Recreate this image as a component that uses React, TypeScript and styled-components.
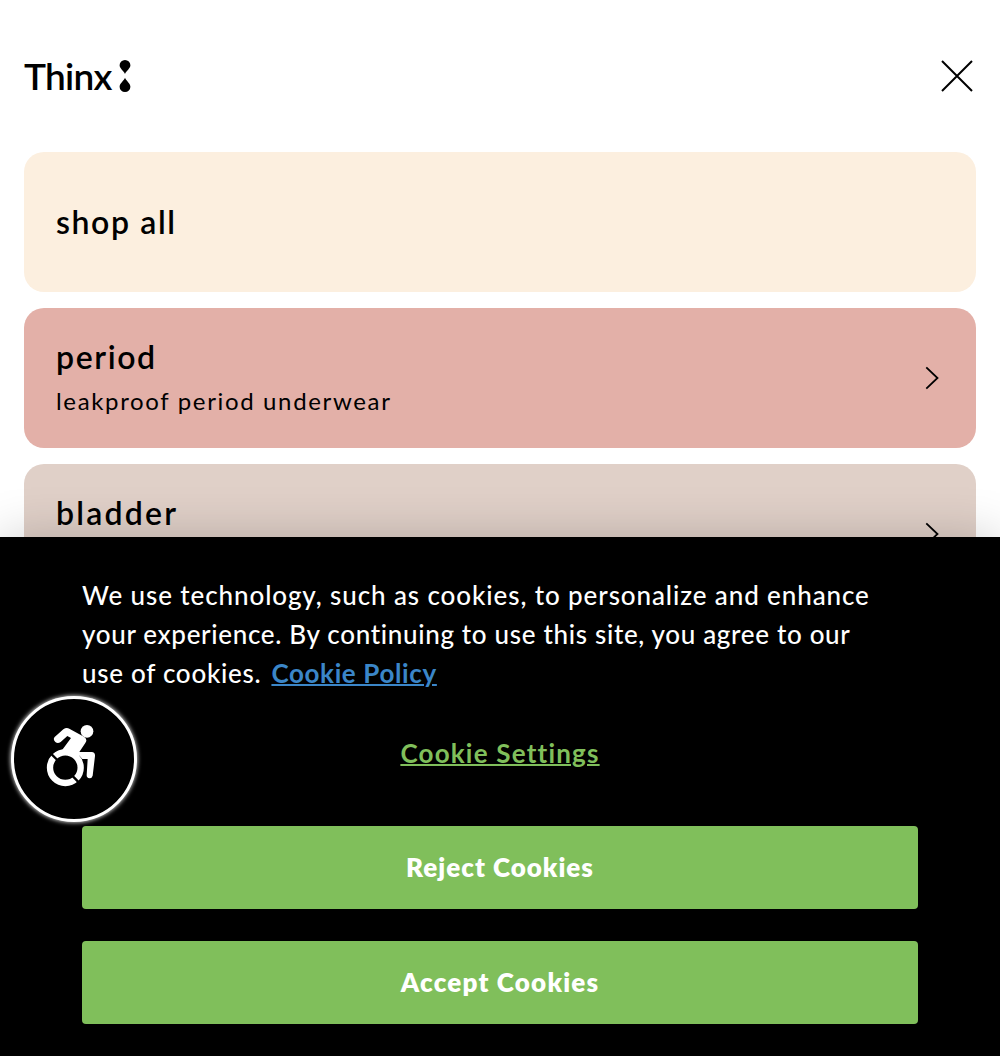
import React from "react";
import styled, { createGlobalStyle } from "styled-components";

const GlobalStyle = createGlobalStyle`
  *, *::before, *::after { box-sizing: border-box; }
  html, body { margin: 0; background: #fff; }
  body { font-family: Lato, "Open Sans", sans-serif; color: #000; overflow: hidden; }
`;

const Page = styled.div`
  position: relative;
  display: flex;
  flex-direction: column;
  height: 1056px;
  overflow: hidden;
`;

const Header = styled.header`
  display: flex;
  align-items: center;
  justify-content: space-between;
  height: 152px;
  padding: 0 27px 0 24px;
`;

const Logo = styled.a`
  display: flex;
  align-items: center;
`;

const Tracked = styled.span<{ $track: number }>`
  letter-spacing: ${(p) => p.$track}px;
  white-space: pre;
`;

const Wordmark = styled.span`
  width: 95px;
  font-size: 37px;
  font-weight: 600;
  line-height: 44px;
`;

const CloseButton = styled.button`
  display: flex;
  padding: 0;
  border: 0;
  background: none;
`;

const Menu = styled.nav`
  display: flex;
  flex-direction: column;
  gap: 16px;
  padding: 0 24px;
`;

const Card = styled.a<{ $bg: string; $single?: boolean }>`
  display: flex;
  align-items: center;
  justify-content: space-between;
  height: 140px;
  padding: 0 37px ${(p) => (p.$single ? 0 : 2)}px 32px;
  border-radius: 20px;
  background: ${(p) => p.$bg};
`;

const CardText = styled.div`
  display: flex;
  flex-direction: column;
  gap: 5px;
`;

const Title = styled.span`
  font-size: 32px;
  font-weight: 600;
  line-height: 42px;
`;

const Subtitle = styled.span`
  font-size: 24px;
  line-height: 36px;
`;

const Chevron = styled.svg`
  width: 14px;
  height: 24px;
  margin-top: 2px;
`;

const Banner = styled.section`
  position: absolute;
  inset: 537px 0 0 0;
  display: flex;
  flex-direction: column;
  padding: 39px 82px 32px;
  background: #000;
  color: #fff;
  box-shadow: 0 0 48px rgba(0, 0, 0, 0.2);
`;

const Notice = styled.p`
  margin: 0;
  font-size: 26px;
  font-weight: 500;
  line-height: 39px;
`;

const PolicyLink = styled.a`
  margin-left: 10px;
  color: #3b86c8;
  font-weight: 700;
  text-decoration: underline;
  text-decoration-thickness: 2px;
`;

const SettingsLink = styled.a`
  align-self: center;
  margin: 40px 0 52px;
  color: #80bf5b;
  font-size: 26px;
  font-weight: 700;
  line-height: 41px;
  text-decoration: underline;
  text-decoration-thickness: 2px;
`;

const Actions = styled.div`
  display: flex;
  flex-direction: column;
  gap: 32px;
`;

const ActionButton = styled.button`
  height: 83px;
  padding: 0 0 2px;
  border: 0;
  border-radius: 4px;
  background: #80bf5b;
  color: #fff;
  font: 800 26px/40px Lato, "Open Sans", sans-serif;
`;

const AccessibilityButton = styled.button`
  position: absolute;
  left: 11px;
  top: 696px;
  width: 126px;
  height: 126px;
  padding: 0;
  border: 3px solid #fff;
  border-radius: 50%;
  background: #000;
  box-shadow: 0 0 4px 0.5px rgba(255, 255, 255, 0.85);
`;

const AccessibilityIcon = styled.svg`
  display: block;
  width: 120px;
  height: 120px;
`;

const CardArrow = () => (
  <Chevron viewBox="0 0 14 24" fill="none" stroke="#000" strokeWidth="1.8">
    <path d="M1.3 1.3 12.5 12 1.3 22.7" />
  </Chevron>
);

export default function App() {
  return (
    <Page>
      <GlobalStyle />
      <Header>
        <Logo>
          <Wordmark><Tracked $track={-0.7}>Thinx</Tracked></Wordmark>
          <svg width="12" height="34" viewBox="0 0 12 34">
            <path d="M6 15C4.8 11.8.6 9.6.6 6.3a5.4 5.4 0 0 1 10.8 0C11.4 9.6 7.2 11.8 6 15ZM6 18.8c1.2 3.2 5.4 5.6 5.4 8.9a5.4 5.4 0 0 1-10.8 0c0-3.3 4.2-5.7 5.4-8.9Z" />
          </svg>
        </Logo>
        <CloseButton aria-label="Close">
          <svg width="32" height="32" viewBox="0 0 32 32" stroke="#000" strokeWidth="2">
            <path d="M1 1 31 31M31 1 1 31" />
          </svg>
        </CloseButton>
      </Header>
      <Menu>
        <Card $bg="#fcefdf" $single>
          <CardText>
            <Title><Tracked $track={1.6}>shop all</Tracked></Title>
          </CardText>
        </Card>
        <Card $bg="#e3b0a8">
          <CardText>
            <Title><Tracked $track={1.6}>period</Tracked></Title>
            <Subtitle><Tracked $track={1.65}>leakproof period underwear</Tracked></Subtitle>
          </CardText>
          <CardArrow />
        </Card>
        <Card $bg="#e0d0c8">
          <CardText>
            <Title><Tracked $track={2.2}>bladder</Tracked></Title>
            <Subtitle><Tracked $track={1.65}>leakproof bladder underwear</Tracked></Subtitle>
          </CardText>
          <CardArrow />
        </Card>
      </Menu>
      <Banner>
        <Notice>
          <Tracked $track={0.9}>We use technology, such as cookies, to personalize and enhance</Tracked>
          <br />
          <Tracked $track={0.67}>your experience. By continuing to use this site, you agree to our</Tracked>
          <br />
          <Tracked $track={0.72}>use of cookies.</Tracked>
          <PolicyLink><Tracked $track={0.63}>Cookie Policy</Tracked></PolicyLink>
        </Notice>
        <SettingsLink><Tracked $track={1.2}>Cookie Settings</Tracked></SettingsLink>
        <Actions>
          <ActionButton><Tracked $track={1}>Reject Cookies</Tracked></ActionButton>
          <ActionButton><Tracked $track={1.2}>Accept Cookies</Tracked></ActionButton>
        </Actions>
      </Banner>
      <AccessibilityButton aria-label="Accessibility">
        <AccessibilityIcon viewBox="-78 -57 360 360">
          <circle cx="76" cy="149" r="46" fill="none" stroke="#fff" strokeWidth="19" />
          <path d="M32 106 52 126M96 172 122 199" stroke="#000" strokeWidth="7" />
          <circle cx="141" cy="40" r="19" fill="#fff" />
          <path
            d="M44 57 70 34Q79 27 88 32L132 56Q144 64 136 75L118 102H155Q166 103 165 114L158 173Q156 181 148 181 140 180 140 172L143 123H127Q120 113 106 106L100 112Q76 103 53 116L43 106Q52 98 67 95L93 60 82 54 62 72Q53 78 46 72 38 64 44 57Z"
            fill="#fff"
          />
        </AccessibilityIcon>
      </AccessibilityButton>
    </Page>
  );
}
